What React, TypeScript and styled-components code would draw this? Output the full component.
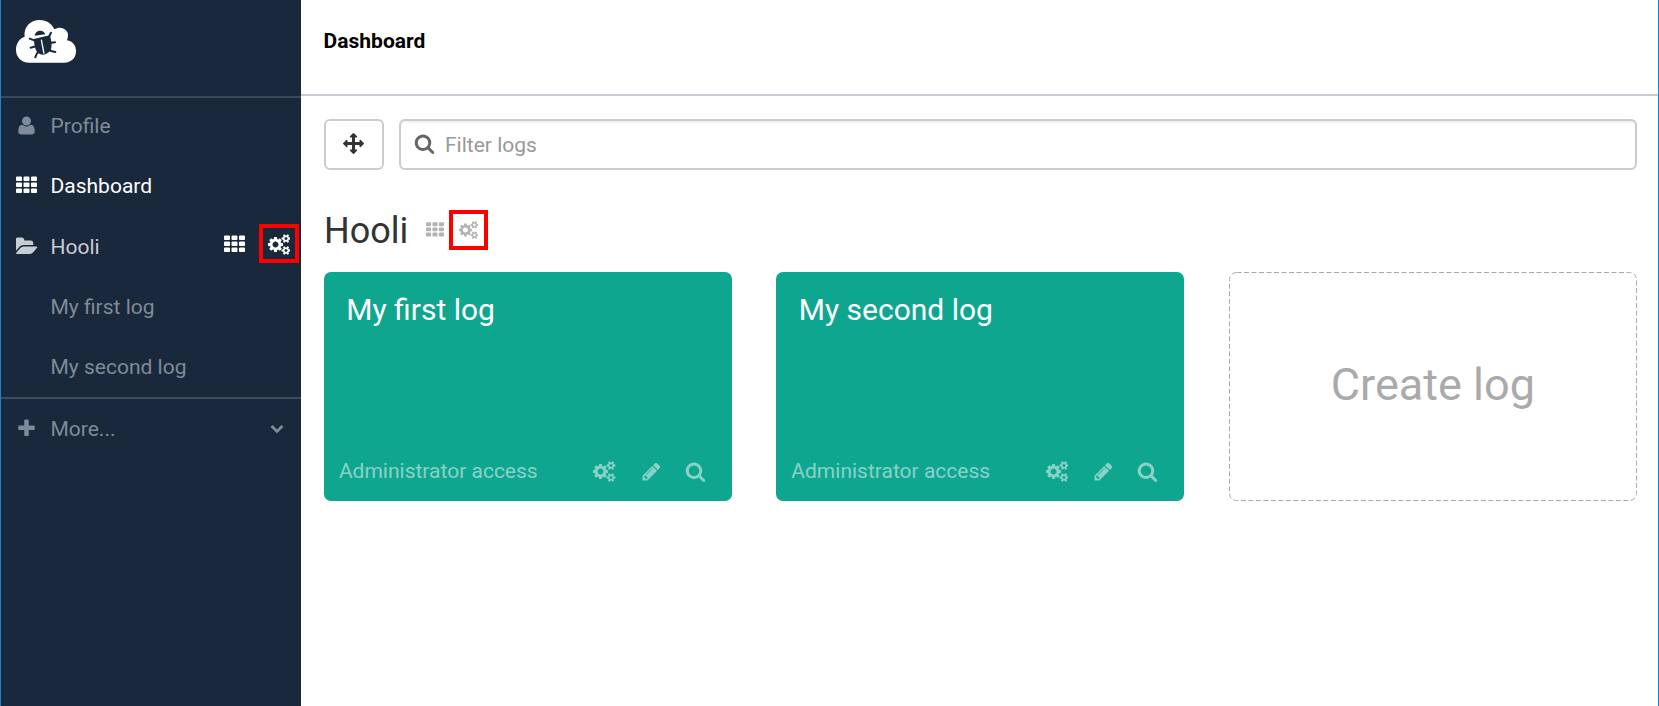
import React from "react";
import styled, { createGlobalStyle } from "styled-components";

const GlobalStyle = createGlobalStyle`
  *, *::after { box-sizing: border-box; }
  body {
    margin: 0;
    background: #fff;
    font-family: Roboto, "Liberation Sans", sans-serif;
    font-size: 21px;
    color: #333;
  }
`;

const glyphs = {
  user: {
    width: 1792,
    d: "M1600 1405q0 120-73 189.500t-194 69.500h-874q-121 0-194-69.500t-73-189.500q0-53 3.500-103.500t14-109 26.500-108.500 43-97.500 62-81 85.500-53.500 111.500-20q9 0 42 21.500t74.500 48 108 48 133.500 21.500 133.500-21.500 108-48 74.500-48 42-21.500q61 0 111.500 20t85.500 53.500 62 81 43 97.500 26.500 108.500 14 109 3.500 103.500zm-320-893q0 159-112.500 271.500t-271.500 112.500-271.500-112.500-112.500-271.500 112.500-271.500 271.500-112.500 271.500 112.500 112.500 271.500z",
  },
  folder: {
    width: 1856,
    d: "M1815 952q0 31-31 66l-336 396q-43 51-120.500 86.500t-143.500 35.500h-1088q-34 0-60.500-13t-26.500-43q0-31 31-66l336-396q43-51 120.500-86.500t143.500-35.500h1088q34 0 60.500 13t26.500 43zm-343-344v160h-832q-94 0-197 47.500t-164 119.500l-337 396-5 6q0-4-.5-12.500t-.5-12.500v-960q0-92 66-158t158-66h320q92 0 158 66t66 158v32h544q92 0 158 66t66 158z",
  },
  plus: {
    width: 1792,
    d: "M1600 736v192q0 40-28 68t-68 28h-416v416q0 40-28 68t-68 28h-192q-40 0-68-28t-28-68v-416h-416q-40 0-68-28t-28-68v-192q0-40 28-68t68-28h416v-416q0-40 28-68t68-28h192q40 0 68 28t28 68v416h416q40 0 68 28t28 68z",
  },
  chevron: {
    width: 1792,
    d: "M1683 808l-742 741q-19 19-45 19t-45-19l-742-741q-19-19-19-45.500t19-45.500l166-165q19-19 45-19t45 19l531 531 531-531q19-19 45-19t45 19l166 165q19 19 19 45.500t-19 45.500z",
  },
  arrows: {
    width: 1792,
    d: "M1792 896q0 26-19 45l-256 256q-19 19-45 19t-45-19-19-45v-128h-384v384h128q26 0 45 19t19 45-19 45l-256 256q-19 19-45 19t-45-19l-256-256q-19-19-19-45t19-45 45-19h128v-384h-384v128q0 26-19 45t-45 19-45-19l-256-256q-19-19-19-45t19-45l256-256q19-19 45-19t45 19 19 45v128h384v-384h-128q-26 0-45-19t-19-45 19-45l256-256q19-19 45-19t45 19l256 256q19 19 19 45t-19 45-45 19h-128v384h384v-128q0-26 19-45t45-19 45 19l256 256q19 19 19 45z",
  },
  search: {
    width: 1792,
    d: "M1216 832q0-185-131.500-316.500t-316.500-131.500-316.500 131.500-131.500 316.500 131.500 316.500 316.500 131.500 316.500-131.500 131.500-316.500zm512 832q0 52-38 90t-90 38q-54 0-90-38l-343-342q-179 124-399 124-143 0-273.500-55.500t-225-150-150-225-55.500-273.500 55.500-273.500 150-225 225-150 273.500-55.500 273.500 55.500 225 150 150 225 55.500 273.500q0 220-124 399l343 343q37 37 37 90z",
  },
  pencil: {
    width: 1792,
    d: "M491 1536l91-91-235-235-91 91v107h128v128h107zm523-928q0-22-22-22-10 0-17 7l-542 542q-7 7-7 17 0 22 22 22 10 0 17-7l542-542q7-7 7-17zm-54-192l416 416-832 832h-416v-416zm683 96q0 53-37 90l-166 166-416-416 166-165q36-38 90-38 53 0 91 38l235 234q37 39 37 91z",
  },
  grid: {
    width: 1792,
    d: [128, 640, 1152]
      .flatMap((y) =>
        [0, 640, 1280].map(
          (x) =>
            `M${x + 512} ${y + 96}v192q0 40-28 68t-68 28h-320q-40 0-68-28t-28-68v-192q0-40 28-68t68-28h320q40 0 68 28t28 68z`
        )
      )
      .join(""),
  },
  cogs: {
    width: 1920,
    d: "M896 896q0-106-75-181t-181-75-181 75-75 181 75 181 181 75 181-75 75-181zm768 512q0-52-38-90t-90-38-90 38-38 90q0 53 37.500 90.500t90.500 37.500 90.500-37.500 37.500-90.500zm0-1024q0-52-38-90t-90-38-90 38-38 90q0 53 37.500 90.500t90.500 37.500 90.500-37.500 37.500-90.500zm-384 421v185q0 10-7 19.500t-16 10.500l-155 24q-11 35-32 76 34 48 90 115 7 11 7 20 0 12-7 19-23 30-82.500 89.500t-78.500 59.500q-11 0-21-7l-115-90q-37 19-77 31-11 108-23 155-7 24-30 24h-186q-11 0-20-7.500t-10-17.500l-23-153q-34-10-75-31l-118 89q-7 7-20 7-11 0-21-8-144-133-144-160 0-9 7-19 10-14 41-53t47-61q-23-44-35-82l-152-24q-10-1-17-9.500t-7-19.500v-185q0-10 7-19.500t16-10.500l155-24q11-35 32-76-34-48-90-115-7-11-7-20 0-12 7-20 22-30 82-89t79-59q11 0 21 7l115 90q34-18 77-32 11-108 23-154 7-24 30-24h186q11 0 20 7.500t10 17.500l23 153q34 10 75 31l118-89q8-7 20-7 11 0 21 8 144 133 144 160 0 8-7 19-12 16-42 54t-45 60q23 48 34 82l152 23q10 2 17 10.500t7 19.500zm640 533v140q0 16-149 31-12 27-30 52 51 113 51 138 0 4-4 7-122 71-124 71-8 0-46-47t-52-68q-20 2-30 2t-30-2q-14 21-52 68t-46 47q-2 0-124-71-4-3-4-7 0-25 51-138-18-25-30-52-149-15-149-31v-140q0-16 149-31 13-29 30-52-51-113-51-138 0-4 4-7 4-2 35-20t59-34 30-16q8 0 46 46.500t52 67.500q20-2 30-2t30 2q51-71 92-112l6-2q4 0 124 70 4 3 4 7 0 25-51 138 17 23 30 52 149 15 149 31zm0-1024v140q0 16-149 31-12 27-30 52 51 113 51 138 0 4-4 7-122 71-124 71-8 0-46-47t-52-68q-20 2-30 2t-30-2q-14 21-52 68t-46 47q-2 0-124-71-4-3-4-7 0-25 51-138-18-25-30-52-149-15-149-31v-140q0-16 149-31 13-29 30-52-51-113-51-138 0-4 4-7 4-2 35-20t59-34 30-16q8 0 46 46.500t52 67.500q20-2 30-2t30 2q51-71 92-112l6-2q4 0 124 70 4 3 4 7 0 25-51 138 17 23 30 52 149 15 149 31z",
  },
};

type GlyphName = keyof typeof glyphs;

const Svg = styled.svg`
  display: block;
  flex: none;
  fill: currentColor;
`;

function Icon({ name, size = 21 }: { name: GlyphName; size?: number }) {
  const g = glyphs[name];
  return (
    <Svg width={(size * g.width) / 1792} height={size} viewBox={`0 0 ${g.width} 1792`} aria-hidden>
      <path d={g.d} />
    </Svg>
  );
}

const Frame = styled.div`
  display: flex;
  height: 706px;
  border-left: 1px solid #1883d7;
  border-right: 1px solid #1883d7;
  overflow: hidden;
`;

const Sidebar = styled.nav`
  width: 300px;
  flex: none;
  background: #1a283b;
`;

const Brand = styled.div`
  height: 98px;
  padding: 20px 0 0 15px;
  border-bottom: 2px solid #3a4858;
`;

const NavItem = styled.a<{ $tone?: string; $height?: number }>`
  display: flex;
  align-items: center;
  height: ${(p) => p.$height ?? 60}px;
  padding-left: 11.5px;
  color: ${(p) => p.$tone ?? "#7f8b98"};
`;

const ProfileItem = styled(NavItem)`
  padding-bottom: 3px;
`;

const NavIcon = styled.span<{ $shift?: number }>`
  display: flex;
  justify-content: center;
  width: 27px;
  margin: 0 11px 1px 0;
  padding-left: ${(p) => p.$shift ?? 0}px;
`;

const NavTools = styled.span`
  display: flex;
  align-items: center;
  gap: 23px;
  margin: 0 11px 4px auto;
  color: #fff;
`;

const NavChevron = styled.span`
  margin: 0 17.5px 2px auto;
`;

const MoreSection = styled.div`
  border-top: 2px solid #3f4a5a;
`;

const Marked = styled.span`
  position: relative;
  display: flex;
  &::after {
    content: "";
    position: absolute;
    left: 50%;
    top: 50%;
    width: 39px;
    height: 40px;
    margin: -20px 0 0 -19.5px;
    border: 4px solid #f00;
  }
`;

const NavMarked = styled(Marked)`
  &::after {
    width: 40px;
    height: 39px;
    margin: -20.5px 0 0 -20px;
  }
`;

const Main = styled.main`
  flex: 1;
  min-width: 0;
`;

const Header = styled.header`
  display: flex;
  align-items: center;
  height: 96px;
  padding: 0 23px 13px 22.5px;
  border-bottom: 2px solid #c8cdd3;
`;

const HeaderTitle = styled.h1`
  margin: 0;
  font-size: 21px;
  font-weight: 700;
  letter-spacing: 0.03px;
  color: #000;
`;

const Content = styled.div`
  padding: 23px 21px 0 23px;
`;

const Toolbar = styled.div`
  display: flex;
  gap: 15px;
`;

const MoveButton = styled.button`
  display: flex;
  align-items: center;
  justify-content: center;
  width: 60px;
  height: 51px;
  padding: 0 1px 2px 0;
  border: 2px solid #ccc;
  border-radius: 6px;
  background: #fff;
  color: #333;
`;

const Filter = styled.div`
  display: flex;
  flex: 1;
  align-items: center;
  gap: 10px;
  height: 51px;
  padding-left: 13px;
  border: 2px solid #ccc;
  border-radius: 6px;
  box-shadow: inset 0 1.5px 1.5px rgba(0, 0, 0, 0.075);
  color: #999;
`;

const FilterIcon = styled.span`
  margin-bottom: 2px;
  color: #666;
`;

const Organization = styled.div`
  display: flex;
  align-items: center;
  height: 42px;
  margin: 40px 0 20px;
`;

const OrganizationName = styled.h2`
  width: 101.5px;
  margin: 0;
  font-size: 36px;
  font-weight: 400;
  line-height: 42px;
  color: #333;
`;

const OrganizationTools = styled.div`
  display: flex;
  align-items: center;
  gap: 15px;
  margin-bottom: 2px;
  color: #b3b3b3;
`;

const Cards = styled.div`
  display: grid;
  grid-template-columns: repeat(3, 408px);
  gap: 44.45px;
`;

const Card = styled.article`
  display: flex;
  flex-direction: column;
  justify-content: space-between;
  height: 229px;
  padding: 20px 26px 16px 14.9px;
  border-radius: 7px;
  background: #0fa68f;
  color: #fff;
`;

const CardTitle = styled.h3`
  margin: 0 0 0 7.4px;
  font-size: 30px;
  font-weight: 400;
  line-height: 36px;
`;

const CardFooter = styled.footer`
  display: flex;
  align-items: center;
  height: 28px;
  color: rgba(255, 255, 255, 0.5);
`;

const CardTools = styled.div`
  display: grid;
  grid-template-columns: 47.6px 44.3px 21px;
  margin: 1px 0 0 auto;
`;

const CreateCard = styled.a`
  position: relative;
  display: flex;
  align-items: center;
  justify-content: center;
  height: 229px;
  padding-bottom: 4px;
  font-size: 45px;
  color: #aaa;
`;

const DashedOutline = styled.svg`
  position: absolute;
  inset: 0;
  width: 100%;
  height: 100%;
  overflow: visible;
  fill: none;
  stroke: #aaa;
  stroke-dasharray: 5 2.5;
`;

function Logo() {
  return (
    <svg width="61" height="44" viewBox="48 60 183 132" aria-hidden>
      <path
        fill="#fff"
        d="M88 188C64 188 48 171 48 149C48 129 59 115 74 110C70 82 91 60 119 60C140 60 156 71 163 88C182 76 207 88 204 109C203 114 202 118 201 121C219 124 228 137 228 154C228 175 213 188 193 188Z"
      />
      <g fill="#1a283b">
        <path d="M104 107C105 97 113 92 121 92C129 92 135 98 136 103Z" />
        <path d="M101 117L149 106C155 121 157 138 152 151Q143 163 129 164Q112 164 107 148C104 138 102 127 101 117Z" />
      </g>
      <path d="M124 119L132 161" stroke="#fff" strokeWidth="4" />
      <path
        fill="none"
        stroke="#1a283b"
        strokeWidth="6"
        strokeLinecap="round"
        strokeLinejoin="round"
        d="M89 116L105 122M153 98L147 111M92 143L110 138M148 129L165 127M106 172L110 162L116 153M147 146L153 153L166 156"
      />
    </svg>
  );
}

function LogCard({ title }: { title: string }) {
  return (
    <Card>
      <CardTitle>{title}</CardTitle>
      <CardFooter>
        Administrator access
        <CardTools>
          <Icon name="cogs" />
          <Icon name="pencil" />
          <Icon name="search" />
        </CardTools>
      </CardFooter>
    </Card>
  );
}

export default function App() {
  return (
    <>
      <GlobalStyle />
      <Frame>
        <Sidebar>
          <Brand>
            <Logo />
          </Brand>
          <ProfileItem $height={58}>
            <NavIcon>
              <Icon name="user" />
            </NavIcon>
            Profile
          </ProfileItem>
          <NavItem $tone="#fff">
            <NavIcon>
              <Icon name="grid" />
            </NavIcon>
            Dashboard
          </NavItem>
          <NavItem $tone="#c8cdd3" $height={61}>
            <NavIcon $shift={1.5}>
              <Icon name="folder" />
            </NavIcon>
            Hooli
            <NavTools>
              <Icon name="grid" />
              <NavMarked>
                <Icon name="cogs" />
              </NavMarked>
            </NavTools>
          </NavItem>
          <NavItem>
            <NavIcon />
            My first log
          </NavItem>
          <NavItem>
            <NavIcon />
            My second log
          </NavItem>
          <MoreSection>
            <NavItem>
              <NavIcon>
                <Icon name="plus" />
              </NavIcon>
              More...
              <NavChevron>
                <Icon name="chevron" size={14} />
              </NavChevron>
            </NavItem>
          </MoreSection>
        </Sidebar>
        <Main>
          <Header>
            <HeaderTitle>Dashboard</HeaderTitle>
          </Header>
          <Content>
            <Toolbar>
              <MoveButton aria-label="Move">
                <Icon name="arrows" />
              </MoveButton>
              <Filter>
                <FilterIcon>
                  <Icon name="search" />
                </FilterIcon>
                Filter logs
              </Filter>
            </Toolbar>
            <Organization>
              <OrganizationName>Hooli</OrganizationName>
              <OrganizationTools>
                <Icon name="grid" size={18} />
                <Marked>
                  <Icon name="cogs" size={18} />
                </Marked>
              </OrganizationTools>
            </Organization>
            <Cards>
              <LogCard title="My first log" />
              <LogCard title="My second log" />
              <CreateCard>
                <DashedOutline viewBox="0 0 408 229" preserveAspectRatio="none" aria-hidden>
                  <rect x="0.5" y="0.5" width="407" height="228" rx="7" />
                </DashedOutline>
                Create log
              </CreateCard>
            </Cards>
          </Content>
        </Main>
      </Frame>
    </>
  );
}
